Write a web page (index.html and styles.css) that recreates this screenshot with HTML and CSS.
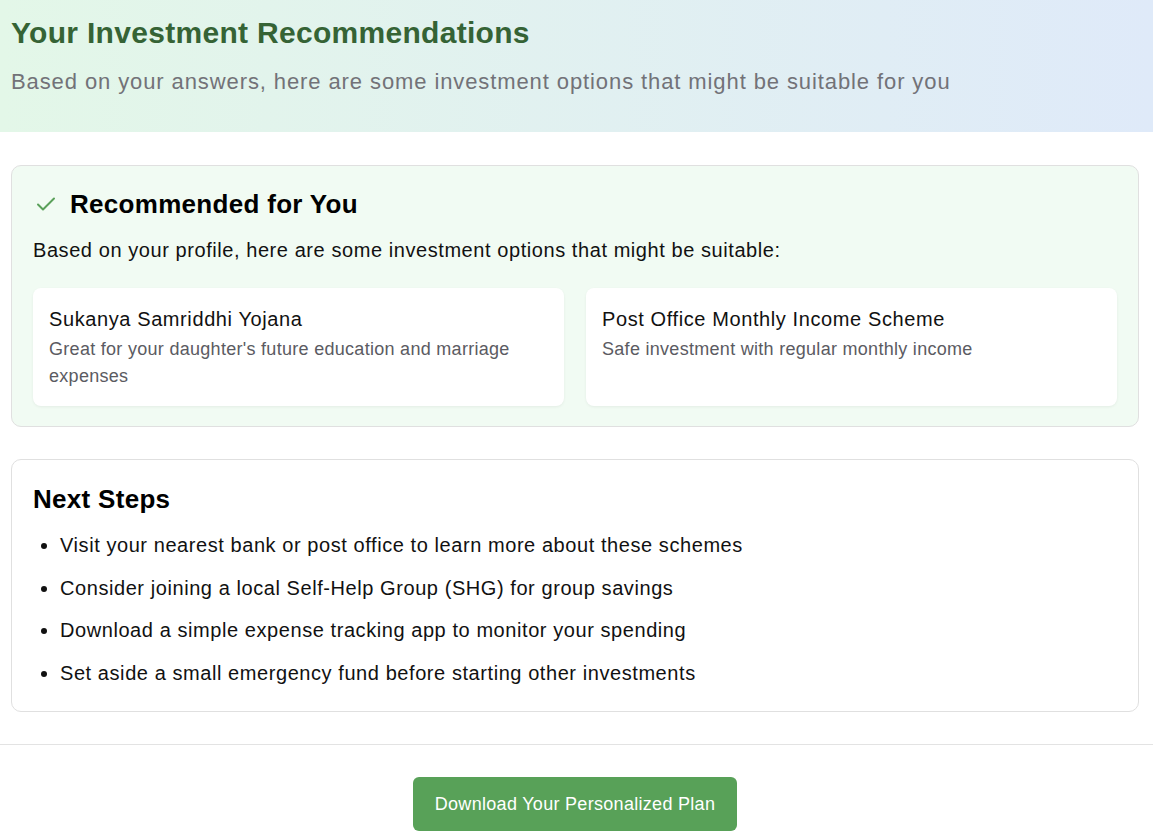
FILE: index.html
```html
<!DOCTYPE html>
<html lang="en">
<head>
<meta charset="utf-8">
<title>Your Investment Recommendations</title>
<link rel="stylesheet" href="styles.css">
</head>
<body>
<header class="hero">
  <h1 class="hero-title">Your Investment Recommendations</h1>
  <p class="hero-sub">Based on your answers, here are some investment options that might be suitable for you</p>
</header>

<main class="content">
  <section class="panel panel-green">
    <h2 class="panel-title">
      <svg class="check" viewBox="0 0 24 24" width="24" height="24" aria-hidden="true"><path d="M4 12.5l5 5L20 6.5" fill="none" stroke="#5aa05a" stroke-width="2" stroke-linecap="round" stroke-linejoin="round"/></svg>
      Recommended for You
    </h2>
    <p class="panel-desc">Based on your profile, here are some investment options that might be suitable:</p>
    <div class="options">
      <div class="option">
        <div class="option-title">Sukanya Samriddhi Yojana</div>
        <div class="option-desc">Great for your daughter's future education and marriage expenses</div>
      </div>
      <div class="option">
        <div class="option-title">Post Office Monthly Income Scheme</div>
        <div class="option-desc">Safe investment with regular monthly income</div>
      </div>
    </div>
  </section>

  <section class="panel">
    <h2 class="panel-title">Next Steps</h2>
    <ul class="steps">
      <li>Visit your nearest bank or post office to learn more about these schemes</li>
      <li>Consider joining a local Self-Help Group (SHG) for group savings</li>
      <li>Download a simple expense tracking app to monitor your spending</li>
      <li>Set aside a small emergency fund before starting other investments</li>
    </ul>
  </section>
</main>

<footer class="actions">
  <button class="btn">Download Your Personalized Plan</button>
</footer>
</body>
</html>
```

FILE: styles.css
```css
* { box-sizing: border-box; }
html, body { margin: 0; padding: 0; background: #fff; }
body {
  font-family: "Liberation Sans", Arial, sans-serif;
  color: #111;
}
.hero {
  background: linear-gradient(90deg, #e3f7e8 0%, #dfeaf9 100%);
  padding: 16px 11px 37px;
}
.hero-title {
  margin: 0;
  font-size: 30px;
  line-height: 34px;
  font-weight: 700;
  letter-spacing: 0.3px;
  color: #356335;
}
.hero-sub {
  margin: 19px 0 0;
  font-size: 22px;
  line-height: 26px;
  letter-spacing: 0.9px;
  color: #727278;
}
.content {
  padding: 33px 14px 32px 11px;
  display: flex;
  flex-direction: column;
  gap: 32px;
}
.panel {
  border: 1px solid #e0e0e0;
  border-radius: 10px;
  background: #fff;
  padding: 23px 21px 22px;
}
.panel-green {
  background: #f1fbf3;
  padding-top: 22px;
  padding-bottom: 20px;
}
.panel-title {
  margin: 0;
  display: flex;
  align-items: center;
  gap: 12px;
  font-size: 26px;
  line-height: 32px;
  font-weight: 700;
  letter-spacing: 0.3px;
  color: #000;
}
.check { flex: none; margin-left: 1px; }
.panel-desc {
  margin: 18px 0 0;
  font-size: 20px;
  line-height: 24px;
  letter-spacing: 0.57px;
  color: #111;
}
.options {
  margin-top: 26px;
  display: grid;
  grid-template-columns: 1fr 1fr;
  gap: 22px;
}
.option {
  background: #fff;
  border-radius: 8px;
  padding: 16px 16px 16px;
  box-shadow: 0 1px 3px rgba(0,0,0,0.06);
}
.option-title {
  font-size: 20px;
  line-height: 30px;
  letter-spacing: 0.6px;
  color: #111;
}
.option-desc {
  margin-top: 2px;
  font-size: 18px;
  line-height: 27px;
  letter-spacing: 0.29px;
  color: #5b5b62;
}
.steps {
  margin: 14px 0 0;
  padding-left: 27px;
  font-size: 20px;
  line-height: 32px;
  letter-spacing: 0.57px;
  color: #111;
}
.steps li { margin-top: 10.7px; }
.steps li:first-child { margin-top: 0; }
.actions {
  border-top: 1px solid #e3e3e3;
  padding-top: 32px;
  display: flex;
  justify-content: center;
}
.btn {
  font-family: "Liberation Sans", Arial, sans-serif;
  font-size: 18px;
  letter-spacing: 0.3px;
  color: #fff;
  background: #58a158;
  border: none;
  border-radius: 6px;
  padding: 0 22px;
  height: 54px;
  margin-right: 3px;
  cursor: pointer;
}
```
